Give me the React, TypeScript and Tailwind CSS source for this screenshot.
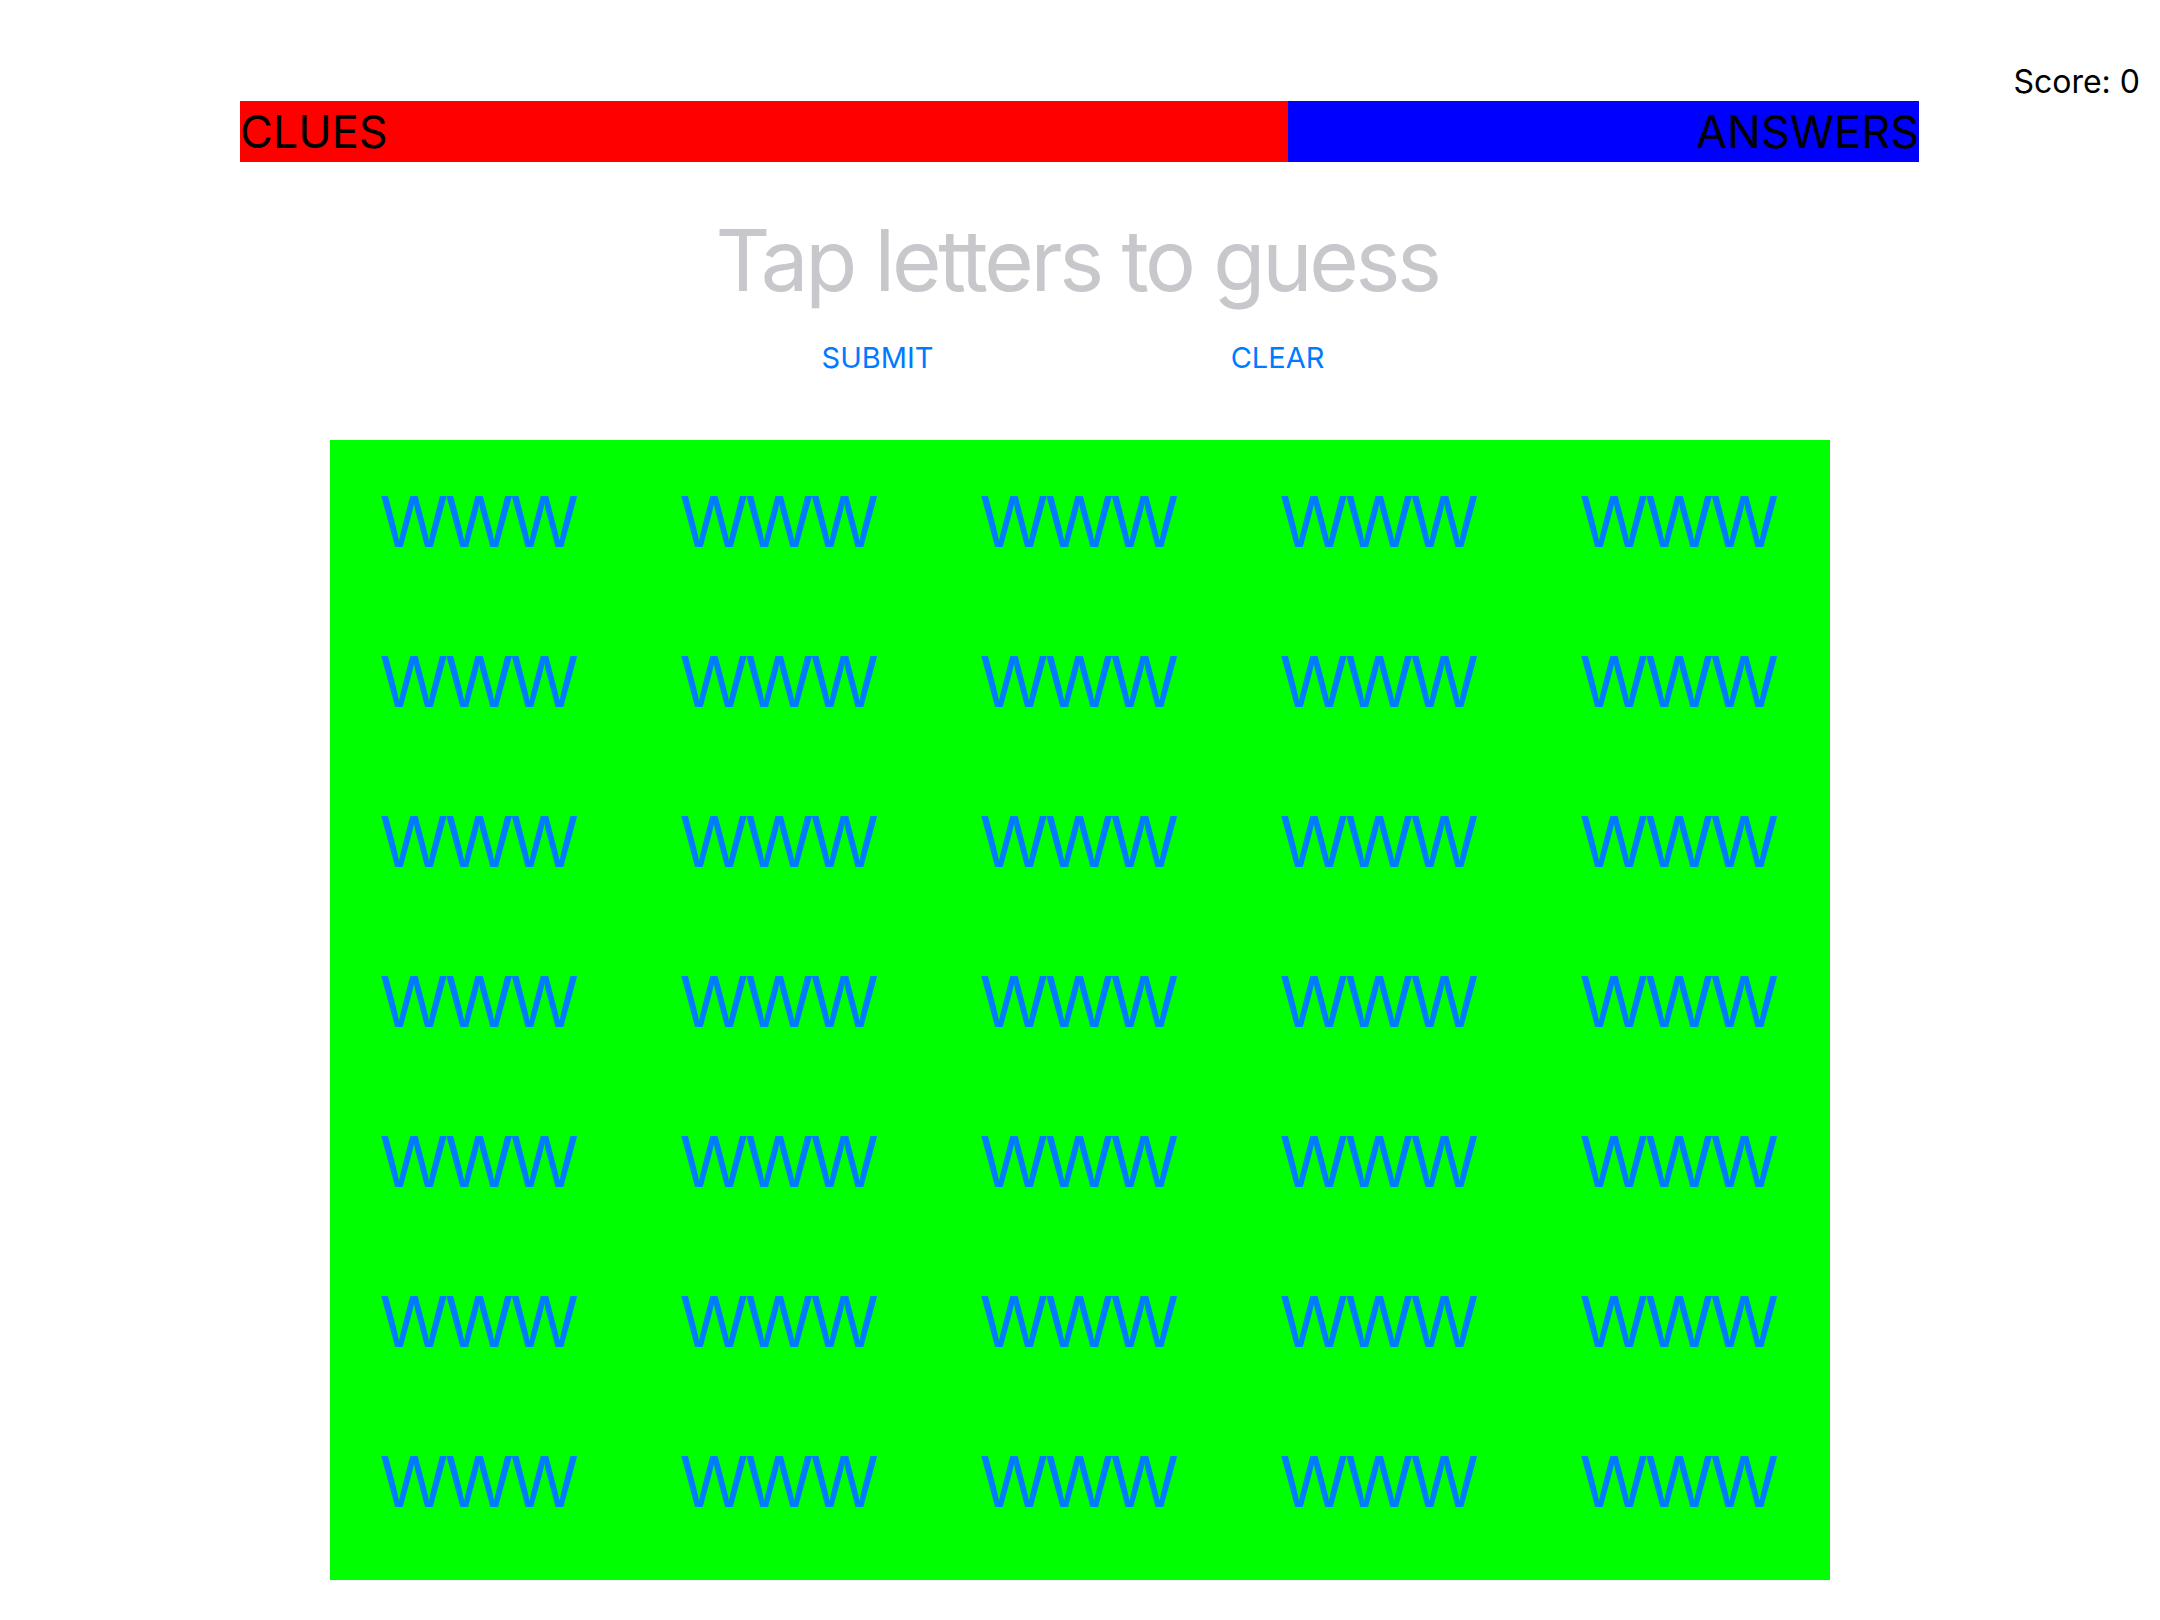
import React from "react";

const rows = Array.from({ length: 7 });
const cols = Array.from({ length: 5 });

const App = () => {
  return (
    <div className="w-[2160px] h-[1620px] bg-white font-['Inter',sans-serif] overflow-hidden">
      <div className="h-[101px] flex justify-end items-start pt-[66px] pr-[20px]">
        <span className="text-[32px] leading-[32px] text-black">Score: 0</span>
      </div>
      <div className="ml-[240px] w-[1679px] h-[61px] flex">
        <div className="w-[1048px] bg-[#ff0000] flex items-center">
          <span className="text-[45px] leading-none text-black">CLUES</span>
        </div>
        <div className="flex-1 bg-[#0000ff] flex items-center justify-end">
          <span className="text-[45px] leading-none text-black">ANSWERS</span>
        </div>
      </div>
      <h1 className="mt-[56px] pr-[6px] text-center text-[85px] leading-[85px] text-[#c7c7cc] tracking-[-3.3px]">
        Tap letters to guess
      </h1>
      <div className="mt-[41px] flex justify-center pr-[5px]">
        <button className="w-[400px] text-center text-[29px] leading-[28px] text-[#007aff]">SUBMIT</button>
        <button className="w-[400px] text-center text-[29px] leading-[28px] text-[#007aff]">CLEAR</button>
      </div>
      <div className="mt-[68px] ml-[330px] w-[1500px] h-[1140px] bg-[#00ff00] grid grid-cols-5 content-start pt-[2px]">
        {rows.map((_, r) =>
          cols.map((_, c) => (
            <div key={`${r}-${c}`} className="h-[160px] flex items-center justify-center pr-[7px]">
              <span className="text-[70px] leading-[70px] text-[#007aff] tracking-[-5.5px]">WWW</span>
            </div>
          ))
        )}
      </div>
    </div>
  );
};

export default App;
